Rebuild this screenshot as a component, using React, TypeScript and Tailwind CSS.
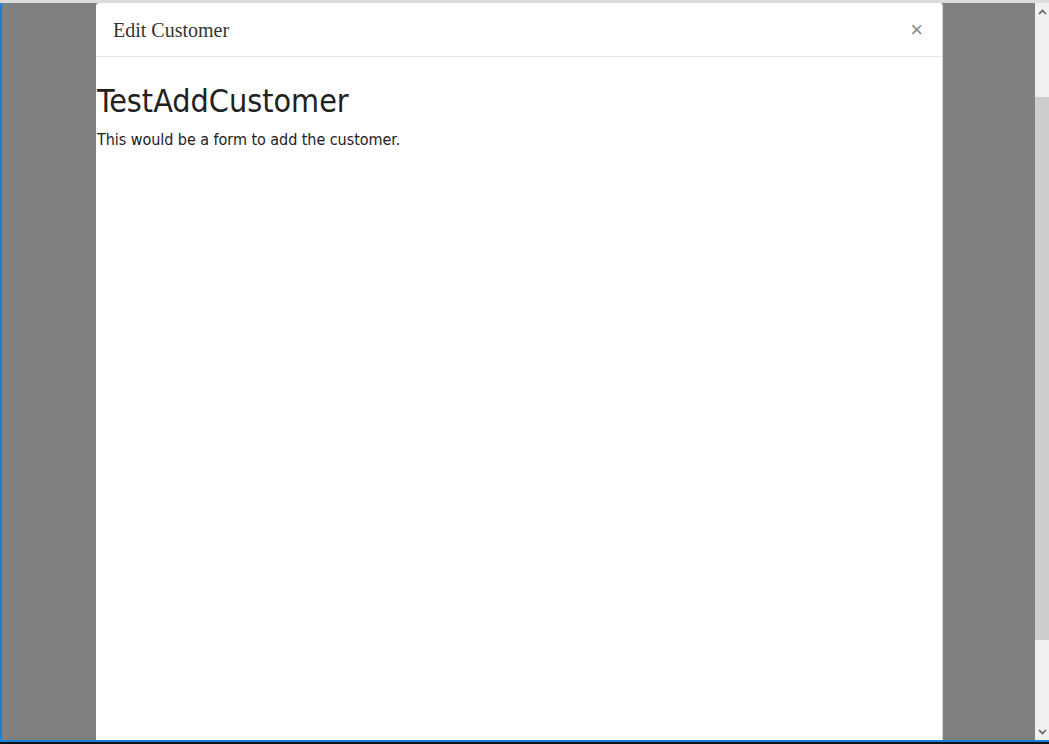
function Scrollbar() {
  return (
    <div className="w-[14px] flex flex-col bg-[#f0f0f0]">
      <div className="h-[17px] flex items-center justify-center">
        <svg width="9" height="6" viewBox="0 0 9 6">
          <path d="M1 5 L4.5 1.5 L8 5" fill="none" stroke="#606060" strokeWidth="1.6" />
        </svg>
      </div>
      <div className="h-[77px]" />
      <div className="h-[543px] bg-[#cdcdcd]" />
      <div className="flex-1" />
      <div className="h-[17px] flex items-center justify-center">
        <svg width="9" height="6" viewBox="0 0 9 6">
          <path d="M1 1 L4.5 4.5 L8 1" fill="none" stroke="#606060" strokeWidth="1.6" />
        </svg>
      </div>
    </div>
  );
}

export default function App() {
  return (
    <div className="w-[1049px] h-[744px] flex flex-col overflow-hidden bg-[#808080]">
      <div className="h-[3px] bg-[#dcdcdc]" />
      <div className="flex-1 flex min-h-0">
        <div className="w-[2px] bg-[#1a7fd6]" />
        <div className="flex-1 flex min-h-0 bg-[#808080]">
          <div className="ml-[94px] w-[847px] bg-white border-r border-[#d8d8d8] rounded-t-[3px] flex flex-col">
            <div className="h-[54px] border-b border-[#e5e5e5] flex items-center justify-between pl-[17px] pr-[19px] pt-[1px]">
              <span className="text-[20px] text-[#333] font-['Liberation_Serif',serif]">Edit Customer</span>
              <span className="text-[22px] leading-none text-[#8a8a8a] font-['Liberation_Sans',sans-serif]">×</span>
            </div>
            <div className="pt-[26px] pl-[1px] text-[#212121] font-['DejaVu_Sans_Condensed','DejaVu_Sans',sans-serif]">
              <h1 className="text-[32px] leading-[36px]">TestAddCustomer</h1>
              <p className="text-[16px] leading-[24px] mt-[9px] tracking-[-0.05px]">This would be a form to add the customer.</p>
            </div>
          </div>
        </div>
        <Scrollbar />
      </div>
      <div className="h-[2px] bg-[#1a7fd6]" />
      <div className="h-[2px] bg-[#101418]" />
    </div>
  );
}
